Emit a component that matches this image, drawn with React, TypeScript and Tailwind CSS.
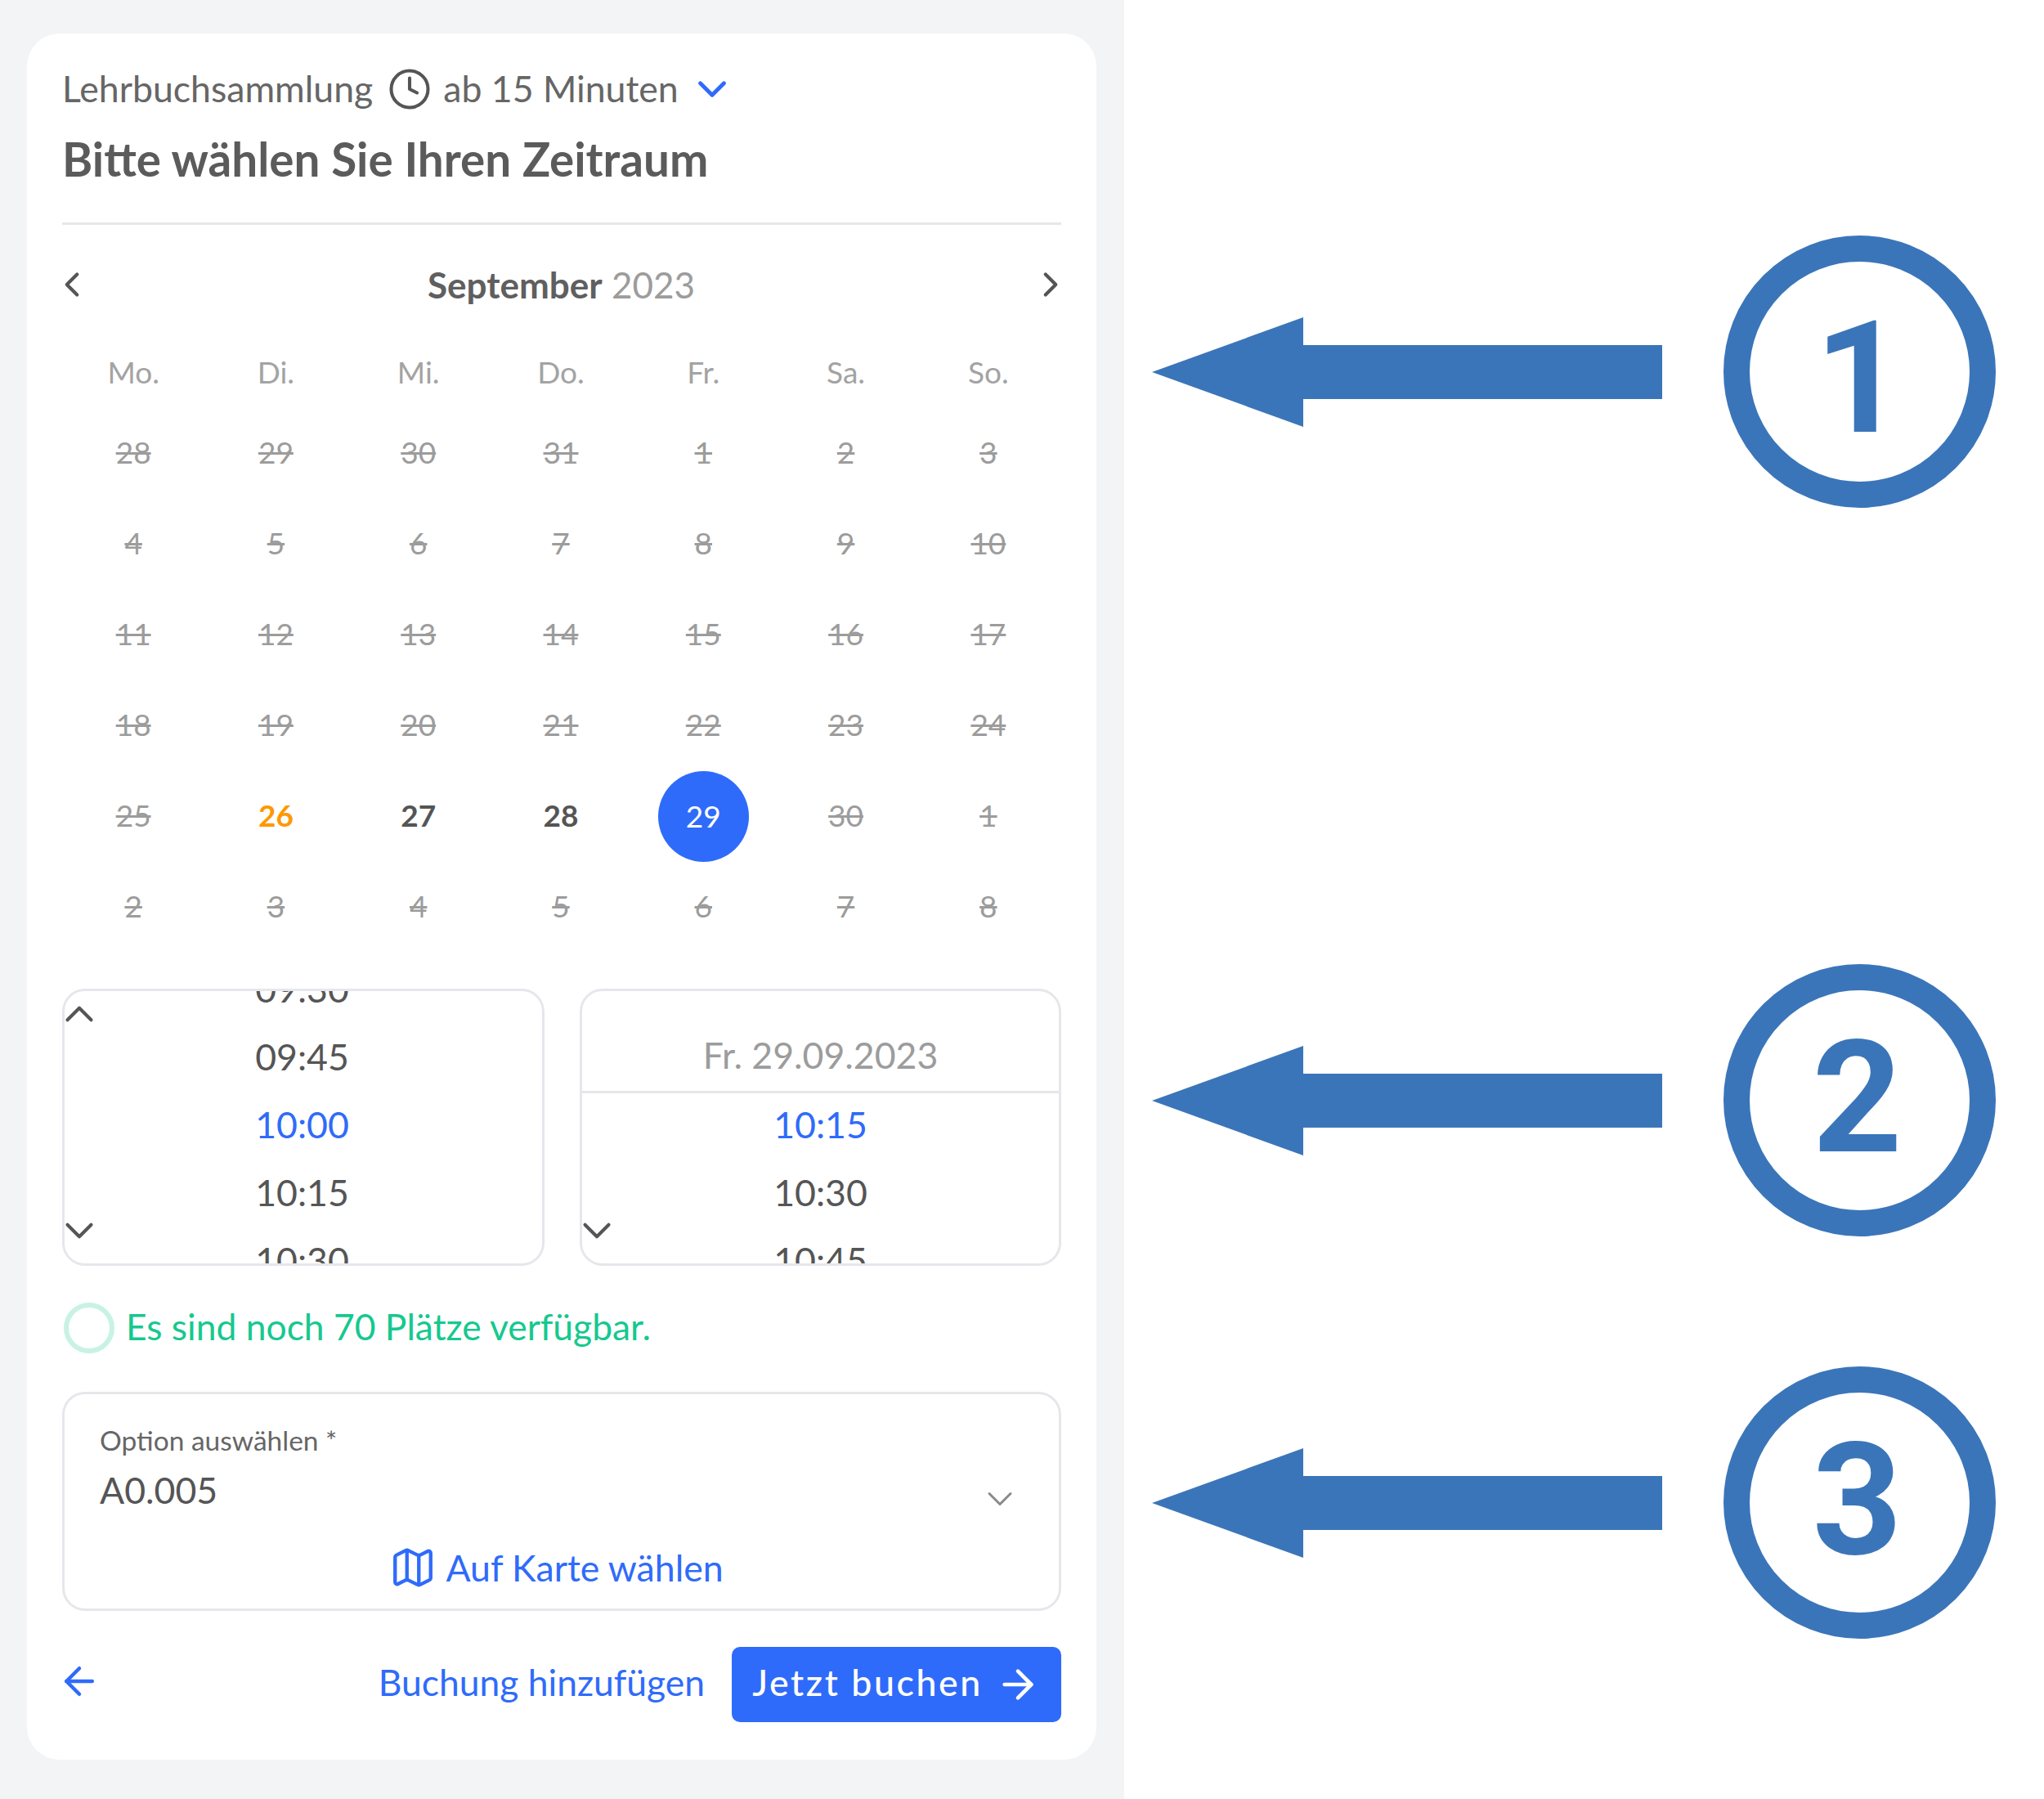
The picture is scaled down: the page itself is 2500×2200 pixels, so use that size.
import { ArrowLeft, ArrowRight, ChevronDown, ChevronLeft, ChevronRight, ChevronUp, Clock, Map as MapIcon } from "lucide-react";

const weekdays = ["Mo.", "Di.", "Mi.", "Do.", "Fr.", "Sa.", "So."];

type Day = { label: string; kind?: "orange" | "open" | "selected" };

const days: Day[] = [
  ...["28", "29", "30", "31", "1", "2", "3", "4", "5", "6", "7", "8", "9", "10", "11", "12", "13", "14", "15", "16", "17", "18", "19", "20", "21", "22", "23", "24", "25"].map((label) => ({ label })),
  { label: "26", kind: "orange" },
  { label: "27", kind: "open" },
  { label: "28", kind: "open" },
  { label: "29", kind: "selected" },
  ...["30", "1", "2", "3", "4", "5", "6", "7", "8"].map((label) => ({ label })),
];

function DayCell({ day }: { day: Day }) {
  if (day.kind === "selected") {
    return (
      <div className="flex h-[111px] items-center justify-center">
        <span className="mt-[3px] flex h-[111px] w-[111px] shrink-0 items-center justify-center rounded-full bg-[#2f6bfa] text-white">{day.label}</span>
      </div>
    );
  }
  if (day.kind === "orange") {
    return <div className="flex h-[111px] items-center justify-center font-bold text-[#ff9800]">{day.label}</div>;
  }
  if (day.kind === "open") {
    return <div className="flex h-[111px] items-center justify-center font-bold text-[#555555]">{day.label}</div>;
  }
  return <div className="flex h-[111px] items-center justify-center text-[#9c9c9c] line-through">{day.label}</div>;
}

function TimeRow({ time, active }: { time: string; active?: boolean }) {
  return (
    <div className={active ? "flex h-[83px] items-center justify-center text-[#2f6bfa]" : "flex h-[83px] items-center justify-center text-[#555555]"}>
      {time}
    </div>
  );
}

function Annotation({ n, className, digitClass }: { n: string; className: string; digitClass: string }) {
  return (
    <div className={`flex items-center gap-[75px] ${className}`}>
      <svg width="624" height="134" viewBox="0 0 624 134" className="shrink-0">
        <path d="M0 67 L185 0 V34 H624 V100 H185 V134 Z" fill="#3b75b9" />
      </svg>
      <div className={`flex h-[333px] w-[333px] items-center justify-center rounded-full border-[32px] border-[#3b75b9] text-[192px] leading-none font-bold text-[#3b75b9] [font-family:Roboto,sans-serif] ${digitClass}`}>
        {n}
      </div>
    </div>
  );
}

export default function App() {
  return (
    <div className="flex h-[2200px] w-[2500px] bg-white [font-family:Lato,sans-serif]">
      <div className="h-full w-[1375px] shrink-0 bg-[#f3f4f6] pt-[41px] pl-[33px]">
        <div className="h-[2111px] w-[1308px] rounded-[40px] bg-white px-[43px]">
          {/* Header */}
          <div className="flex h-[125px] items-center pt-[10px] text-[44.6px] text-[#666666]">
            <span>Lehrbuchsammlung</span>
            <Clock size={54} strokeWidth={1.8} className="mr-[14px] ml-[18px] text-[#555555]" />
            <span>ab 15 Minuten</span>
            <ChevronDown size={58} strokeWidth={2} className="ml-[12px] text-[#2f6bfa]" />
          </div>
          <h1 className="border-b-[3px] border-[#e5e7eb] pb-[50px] text-[56.6px] leading-[56px] font-bold text-[#5b5b5b]">Bitte wählen Sie Ihren Zeitraum</h1>

          {/* Calendar */}
          <div className="flex h-[146px] items-center justify-between text-[44px]">
            <ChevronLeft size={50} strokeWidth={2} className="-ml-[13px] text-[#555555]" />
            <div>
              <span className="font-bold text-[#5f5f5f]">September</span> <span className="text-[#9c9c9c]">2023</span>
            </div>
            <ChevronRight size={50} strokeWidth={2} className="-mr-[12px] text-[#555555]" />
          </div>
          <div className="mt-[2px] grid grid-cols-7 pr-[2px] text-center text-[37px] text-[#a3a3a3]">
            {weekdays.map((d) => (
              <div key={d} className="flex h-[64px] items-center justify-center">
                {d}
              </div>
            ))}
          </div>
          <div className="mt-[10px] grid grid-cols-7 pr-[2px] text-[37px]">
            {days.map((day, i) => (
              <DayCell key={i} day={day} />
            ))}
          </div>

          {/* Time pickers */}
          <div className="mt-[46px] flex justify-between text-[44.6px]">
            <div className="relative h-[339px] w-[590px] overflow-hidden rounded-[28px] border-[3px] border-[#e5e7eb]">
              <div className="-mt-[44px] pr-[3px]">
                <TimeRow time="09:30" />
                <TimeRow time="09:45" />
                <TimeRow time="10:00" active />
                <TimeRow time="10:15" />
                <TimeRow time="10:30" />
              </div>
              <ChevronUp size={58} strokeWidth={1.7} className="absolute top-[-1px] left-[-11px] text-[#555555]" />
              <ChevronDown size={58} strokeWidth={1.7} className="absolute bottom-[11px] left-[-11px] text-[#555555]" />
            </div>
            <div className="relative h-[339px] w-[589px] overflow-hidden rounded-[28px] border-[3px] border-[#e5e7eb]">
              <div className="flex h-[125px] items-center justify-center border-b-[3px] border-[#e5e7eb] pt-[35px] text-[#9c9c9c]">Fr. 29.09.2023</div>
              <div className="-mt-[3px]">
                <TimeRow time="10:15" active />
                <TimeRow time="10:30" />
                <TimeRow time="10:45" />
              </div>
              <ChevronDown size={58} strokeWidth={1.7} className="absolute bottom-[11px] left-[-11px] text-[#555555]" />
            </div>
          </div>

          {/* Availability */}
          <div className="mt-[45px] ml-[2px] flex h-[62px] items-center gap-[14px] text-[44.4px] leading-[56px] text-[#16c88f]">
            <span className="h-[62px] w-[62px] rounded-full border-[6px] border-[#c8f2e4]" />
            <span className="pb-[5px]">Es sind noch 70 Plätze verfügbar.</span>
          </div>

          {/* Option */}
          <div className="relative mt-[47px] h-[268px] rounded-[28px] border-[3px] border-[#e5e7eb] px-[43px] pt-[35px]">
            <div className="text-[33.5px] leading-[42px] text-[#666666]">Option auswählen *</div>
            <div className="mt-[12px] text-[44.6px] leading-[56px] text-[#555555]">A0.005</div>
            <ChevronDown size={52} strokeWidth={1.4} className="absolute top-[102px] right-[46px] text-[#8a8a8a]" />
            <div className="mt-[38px] flex items-center justify-center gap-[11px] pr-[13px] text-[44.6px] leading-[56px] text-[#2f6bfa]">
              <MapIcon size={58} strokeWidth={1.8} />
              <span>Auf Karte wählen</span>
            </div>
          </div>

          {/* Footer */}
          <div className="mt-[44px] flex items-center justify-between">
            <ArrowLeft size={54} strokeWidth={2} className="mb-[8px] -ml-[6px] text-[#2f6bfa]" />
            <div className="flex items-center gap-[33px]">
              <span className="pb-[5px] text-[44.4px] text-[#2f6bfa]">Buchung hinzufügen</span>
              <div className="flex h-[92px] w-[403px] items-center justify-center gap-[15px] rounded-[10px] bg-[#2f6bfa] text-[44.6px] font-medium tracking-[2.6px] text-white">
                <span className="pb-[5px]">Jetzt buchen</span>
                <ArrowRight size={56} strokeWidth={2} />
              </div>
            </div>
          </div>
        </div>
      </div>

      {/* Annotations */}
      <div className="flex-1 pt-[288px] pl-[34px]">
        <Annotation n="1" className="" digitClass="pt-[16px]" />
        <Annotation n="2" className="mt-[558px]" digitClass="pr-[6px] pb-[6px]" />
        <Annotation n="3" className="mt-[159px]" digitClass="pr-[6px] pb-[6px]" />
      </div>
    </div>
  );
}
